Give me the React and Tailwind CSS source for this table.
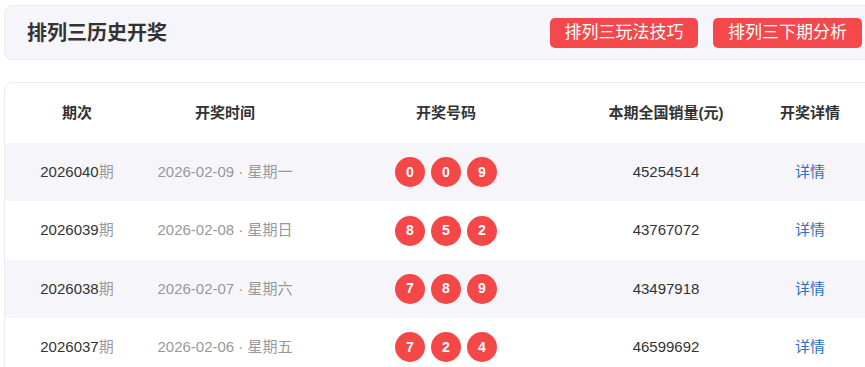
import React from "react";

const rows = [
  { id: "2026040", date: "2026-02-09", week: "星期一", nums: [0, 0, 9], sales: "45254514" },
  { id: "2026039", date: "2026-02-08", week: "星期日", nums: [8, 5, 2], sales: "43767072" },
  { id: "2026038", date: "2026-02-07", week: "星期六", nums: [7, 8, 9], sales: "43497918" },
  { id: "2026037", date: "2026-02-06", week: "星期五", nums: [7, 2, 4], sales: "46599692" },
];

const cols = "grid grid-cols-[144px_152px_290px_150px_138px]";

export default function App() {
  return (
    <div className="w-[865px] h-[367px] overflow-hidden bg-white font-['Liberation_Sans','Noto_Sans_CJK_SC',sans-serif]">
      <div className="w-[876px] pl-[4px] pt-[5px]">
        <div className="h-[55px] rounded-lg border border-[#ececf0] bg-[#f6f6fa] flex items-center justify-between pl-[22px] pr-[13px]">
          <div className="text-[20px] font-bold text-[#333]">排列三历史开奖</div>
          <div className="flex gap-[15px]">
            <div className="h-[30px] w-[148px] rounded-[5px] bg-[#f5484a] text-white text-[17px] flex items-center justify-center">排列三玩法技巧</div>
            <div className="h-[30px] w-[149px] rounded-[5px] bg-[#f5484a] text-white text-[17px] flex items-center justify-center">排列三下期分析</div>
          </div>
        </div>
        <div className="mt-[22px] rounded-lg border border-[#ececf0] bg-white overflow-hidden">
          <div className={`${cols} h-[60px] items-center text-[15px] font-bold text-[#333] text-center`}>
            <div>期次</div>
            <div>开奖时间</div>
            <div>开奖号码</div>
            <div>本期全国销量(元)</div>
            <div>开奖详情</div>
          </div>
          {rows.map((r, i) => (
            <div
              key={r.id}
              className={`${cols} h-[58.4px] items-center text-[15px] text-center ${i % 2 === 0 ? "bg-[#f6f6fa]" : "bg-white"}`}
            >
              <div className="text-[#333]">
                {r.id}
                <span className="text-[#999]">期</span>
              </div>
              <div className="text-[#999]">
                {r.date} · {r.week}
              </div>
              <div className="flex justify-center gap-[6px]">
                {r.nums.map((n, j) => (
                  <div
                    key={j}
                    className="w-[30px] h-[30px] rounded-full bg-[#f44748] text-white text-[14px] font-bold flex items-center justify-center"
                  >
                    {n}
                  </div>
                ))}
              </div>
              <div className="text-[#333]">{r.sales}</div>
              <div className="text-[#2b6fc2]">详情</div>
            </div>
          ))}
        </div>
      </div>
    </div>
  );
}
